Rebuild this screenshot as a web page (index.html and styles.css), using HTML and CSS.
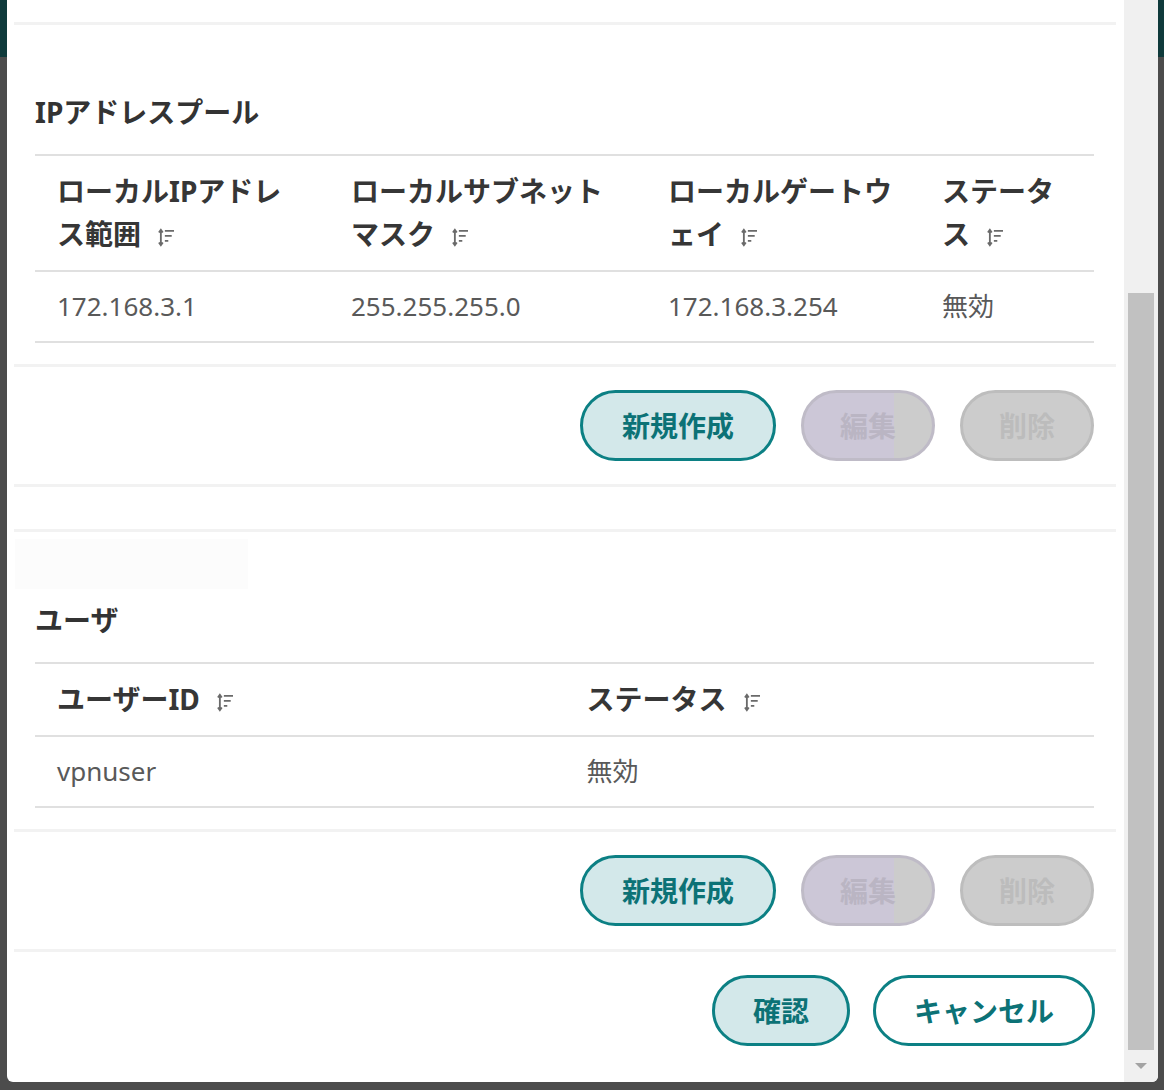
FILE: index.html
```html
<!DOCTYPE html>
<html lang="ja">
<head>
<meta charset="utf-8">
<title>VPN設定</title>
<link rel="stylesheet" href="styles.css">
</head>
<body>
<div class="page">
  <div class="dialog">
    <div class="content">
      <div class="sep sep-top"></div>

      <section class="block">
        <h2 class="title">IPアドレスプール</h2>
        <table class="grid">
          <colgroup>
            <col class="ip-c1"><col class="ip-c2"><col class="ip-c3"><col class="ip-c4">
          </colgroup>
          <thead>
            <tr>
              <th>ローカルIPアドレ<br>ス範囲<svg class="sort" viewBox="0 0 14 16"><path d="M2.5 1.5V14.5M0.8 3.6L2.5 1.3L4.2 3.6M0.8 12.4L2.5 14.7L4.2 12.4M6 2.2H14M6 6.6H12M6 11H9"/></svg></th>
              <th>ローカルサブネット<br>マスク<svg class="sort" viewBox="0 0 14 16"><path d="M2.5 1.5V14.5M0.8 3.6L2.5 1.3L4.2 3.6M0.8 12.4L2.5 14.7L4.2 12.4M6 2.2H14M6 6.6H12M6 11H9"/></svg></th>
              <th>ローカルゲートウ<br>ェイ<svg class="sort" viewBox="0 0 14 16"><path d="M2.5 1.5V14.5M0.8 3.6L2.5 1.3L4.2 3.6M0.8 12.4L2.5 14.7L4.2 12.4M6 2.2H14M6 6.6H12M6 11H9"/></svg></th>
              <th>ステータ<br>ス<svg class="sort" viewBox="0 0 14 16"><path d="M2.5 1.5V14.5M0.8 3.6L2.5 1.3L4.2 3.6M0.8 12.4L2.5 14.7L4.2 12.4M6 2.2H14M6 6.6H12M6 11H9"/></svg></th>
            </tr>
          </thead>
          <tbody>
            <tr>
              <td>172.168.3.1</td>
              <td>255.255.255.0</td>
              <td>172.168.3.254</td>
              <td>無効</td>
            </tr>
          </tbody>
        </table>
      </section>

      <div class="sep"></div>
      <div class="actions">
        <button class="btn btn-primary">新規作成</button>
        <button class="btn btn-disabled btn-edit">編集</button>
        <button class="btn btn-disabled">削除</button>
      </div>
      <div class="sep"></div>

      <div class="sep sep-spaced"></div>
      <div class="ghost"></div>

      <section class="block">
        <h2 class="title title-tight">ユーザ</h2>
        <table class="grid">
          <colgroup>
            <col class="u-c1"><col class="u-c2">
          </colgroup>
          <thead>
            <tr>
              <th>ユーザーID<svg class="sort" viewBox="0 0 14 16"><path d="M2.5 1.5V14.5M0.8 3.6L2.5 1.3L4.2 3.6M0.8 12.4L2.5 14.7L4.2 12.4M6 2.2H14M6 6.6H12M6 11H9"/></svg></th>
              <th>ステータス<svg class="sort" viewBox="0 0 14 16"><path d="M2.5 1.5V14.5M0.8 3.6L2.5 1.3L4.2 3.6M0.8 12.4L2.5 14.7L4.2 12.4M6 2.2H14M6 6.6H12M6 11H9"/></svg></th>
            </tr>
          </thead>
          <tbody>
            <tr>
              <td>vpnuser</td>
              <td>無効</td>
            </tr>
          </tbody>
        </table>
      </section>

      <div class="sep"></div>
      <div class="actions">
        <button class="btn btn-primary">新規作成</button>
        <button class="btn btn-disabled btn-edit">編集</button>
        <button class="btn btn-disabled">削除</button>
      </div>
      <div class="sep"></div>

      <div class="actions actions-footer">
        <button class="btn btn-primary btn-confirm">確認</button>
        <button class="btn btn-outline">キャンセル</button>
      </div>
    </div>

    <div class="scrollbar">
      <div class="thumb"></div>
      <div class="arrow-down"></div>
    </div>
  </div>
</div>
</body>
</html>
```

FILE: styles.css
```css
html, body {
  margin: 0;
  padding: 0;
}

body {
  width: 1164px;
  height: 1090px;
  overflow: hidden;
  background: linear-gradient(to bottom, #0f3a3b 0, #0f3a3b 57px, #4c4c4c 57px, #4c4c4c 100%);
  font-family: "Noto Sans", "Noto Sans CJK JP", sans-serif;
}

.page {
  display: flex;
  padding-left: 7px;
  height: 1090px;
  box-sizing: border-box;
}

.dialog {
  display: flex;
  width: 1151px;
  height: 1082px;
  background: #ffffff;
  border-radius: 0 0 6px 6px;
  overflow: hidden;
}

.content {
  flex: 1;
  padding: 0 8px 0 7px;
  min-width: 0;
}

.sep {
  height: 3px;
  background: #f2f2f2;
}

.sep-top {
  margin-top: 22px;
}

.sep-spaced {
  margin-top: 42px;
}

.ghost {
  margin: 7px 0 0 1px;
  width: 233px;
  height: 50px;
  background: #fcfcfc;
}

.block {
  padding: 0 22px 21px 21px;
}

.title {
  margin: 67px 0 22px;
  font-size: 28px;
  line-height: 40px;
  font-weight: 700;
  color: #333333;
}

.title-tight {
  margin-top: 11px;
}

.grid {
  width: 100%;
  table-layout: fixed;
  border-collapse: separate;
  border-spacing: 0;
}

.ip-c1 { width: 294px; }
.ip-c2 { width: 317px; }
.ip-c3 { width: 274px; }
.ip-c4 { width: 174px; }

.u-c1 { width: 50%; }
.u-c2 { width: 50%; }

.grid th {
  padding: 14px 22px;
  text-align: left;
  font-size: 28px;
  line-height: 43px;
  font-weight: 700;
  color: #363636;
  white-space: nowrap;
  border-top: 2px solid #e0e0e0;
  border-bottom: 2px solid #e0e0e0;
  vertical-align: top;
}

.grid td {
  padding: 14px 22px 15px;
  font-size: 26px;
  line-height: 40px;
  font-weight: 400;
  color: #595959;
  border-bottom: 2px solid #e0e0e0;
  white-space: nowrap;
}

.sort {
  width: 16px;
  height: 19px;
  margin-left: 17px;
  vertical-align: -2px;
  fill: none;
  stroke: #6a6a6a;
  stroke-width: 1.6;
}

.actions {
  display: flex;
  justify-content: flex-end;
  gap: 25px;
  padding: 23px 22px 23px 0;
}

.actions-footer {
  gap: 23px;
  padding-right: 21px;
}

.btn {
  height: 71px;
  box-sizing: border-box;
  padding: 0 36px;
  border: 3px solid #0c8084;
  border-radius: 36px;
  font-family: "Noto Sans", "Noto Sans CJK JP", sans-serif;
  font-size: 28px;
  font-weight: 700;
  line-height: 1;
  cursor: pointer;
}

.btn-primary {
  background: #d3e8ea;
  color: #0c7276;
  padding: 0 39px;
}

.btn-confirm {
  padding: 0 38px;
}

.btn-outline {
  background: #ffffff;
  color: #0c7276;
  padding: 0 38px;
}

.btn-disabled {
  background: #cccccc;
  border-color: #bdbdbd;
  color: #bcbcbc;
  cursor: default;
}

.btn-edit {
  background: linear-gradient(to right, #ccc7d7 0, #ccc7d7 70%, #cccccc 70%, #cccccc 100%);
  border-color: #bfbbc7;
  color: #bab5c3;
}

.scrollbar {
  flex: 0 0 34px;
  display: flex;
  flex-direction: column;
  align-items: center;
  padding-top: 293px;
  box-sizing: border-box;
  background: #f0f0f0;
}

.thumb {
  width: 26px;
  height: 757px;
  background: #c1c1c1;
}

.arrow-down {
  margin-top: 13px;
  width: 0;
  height: 0;
  border-left: 6px solid transparent;
  border-right: 6px solid transparent;
  border-top: 6px solid #a3a3a3;
}
```
